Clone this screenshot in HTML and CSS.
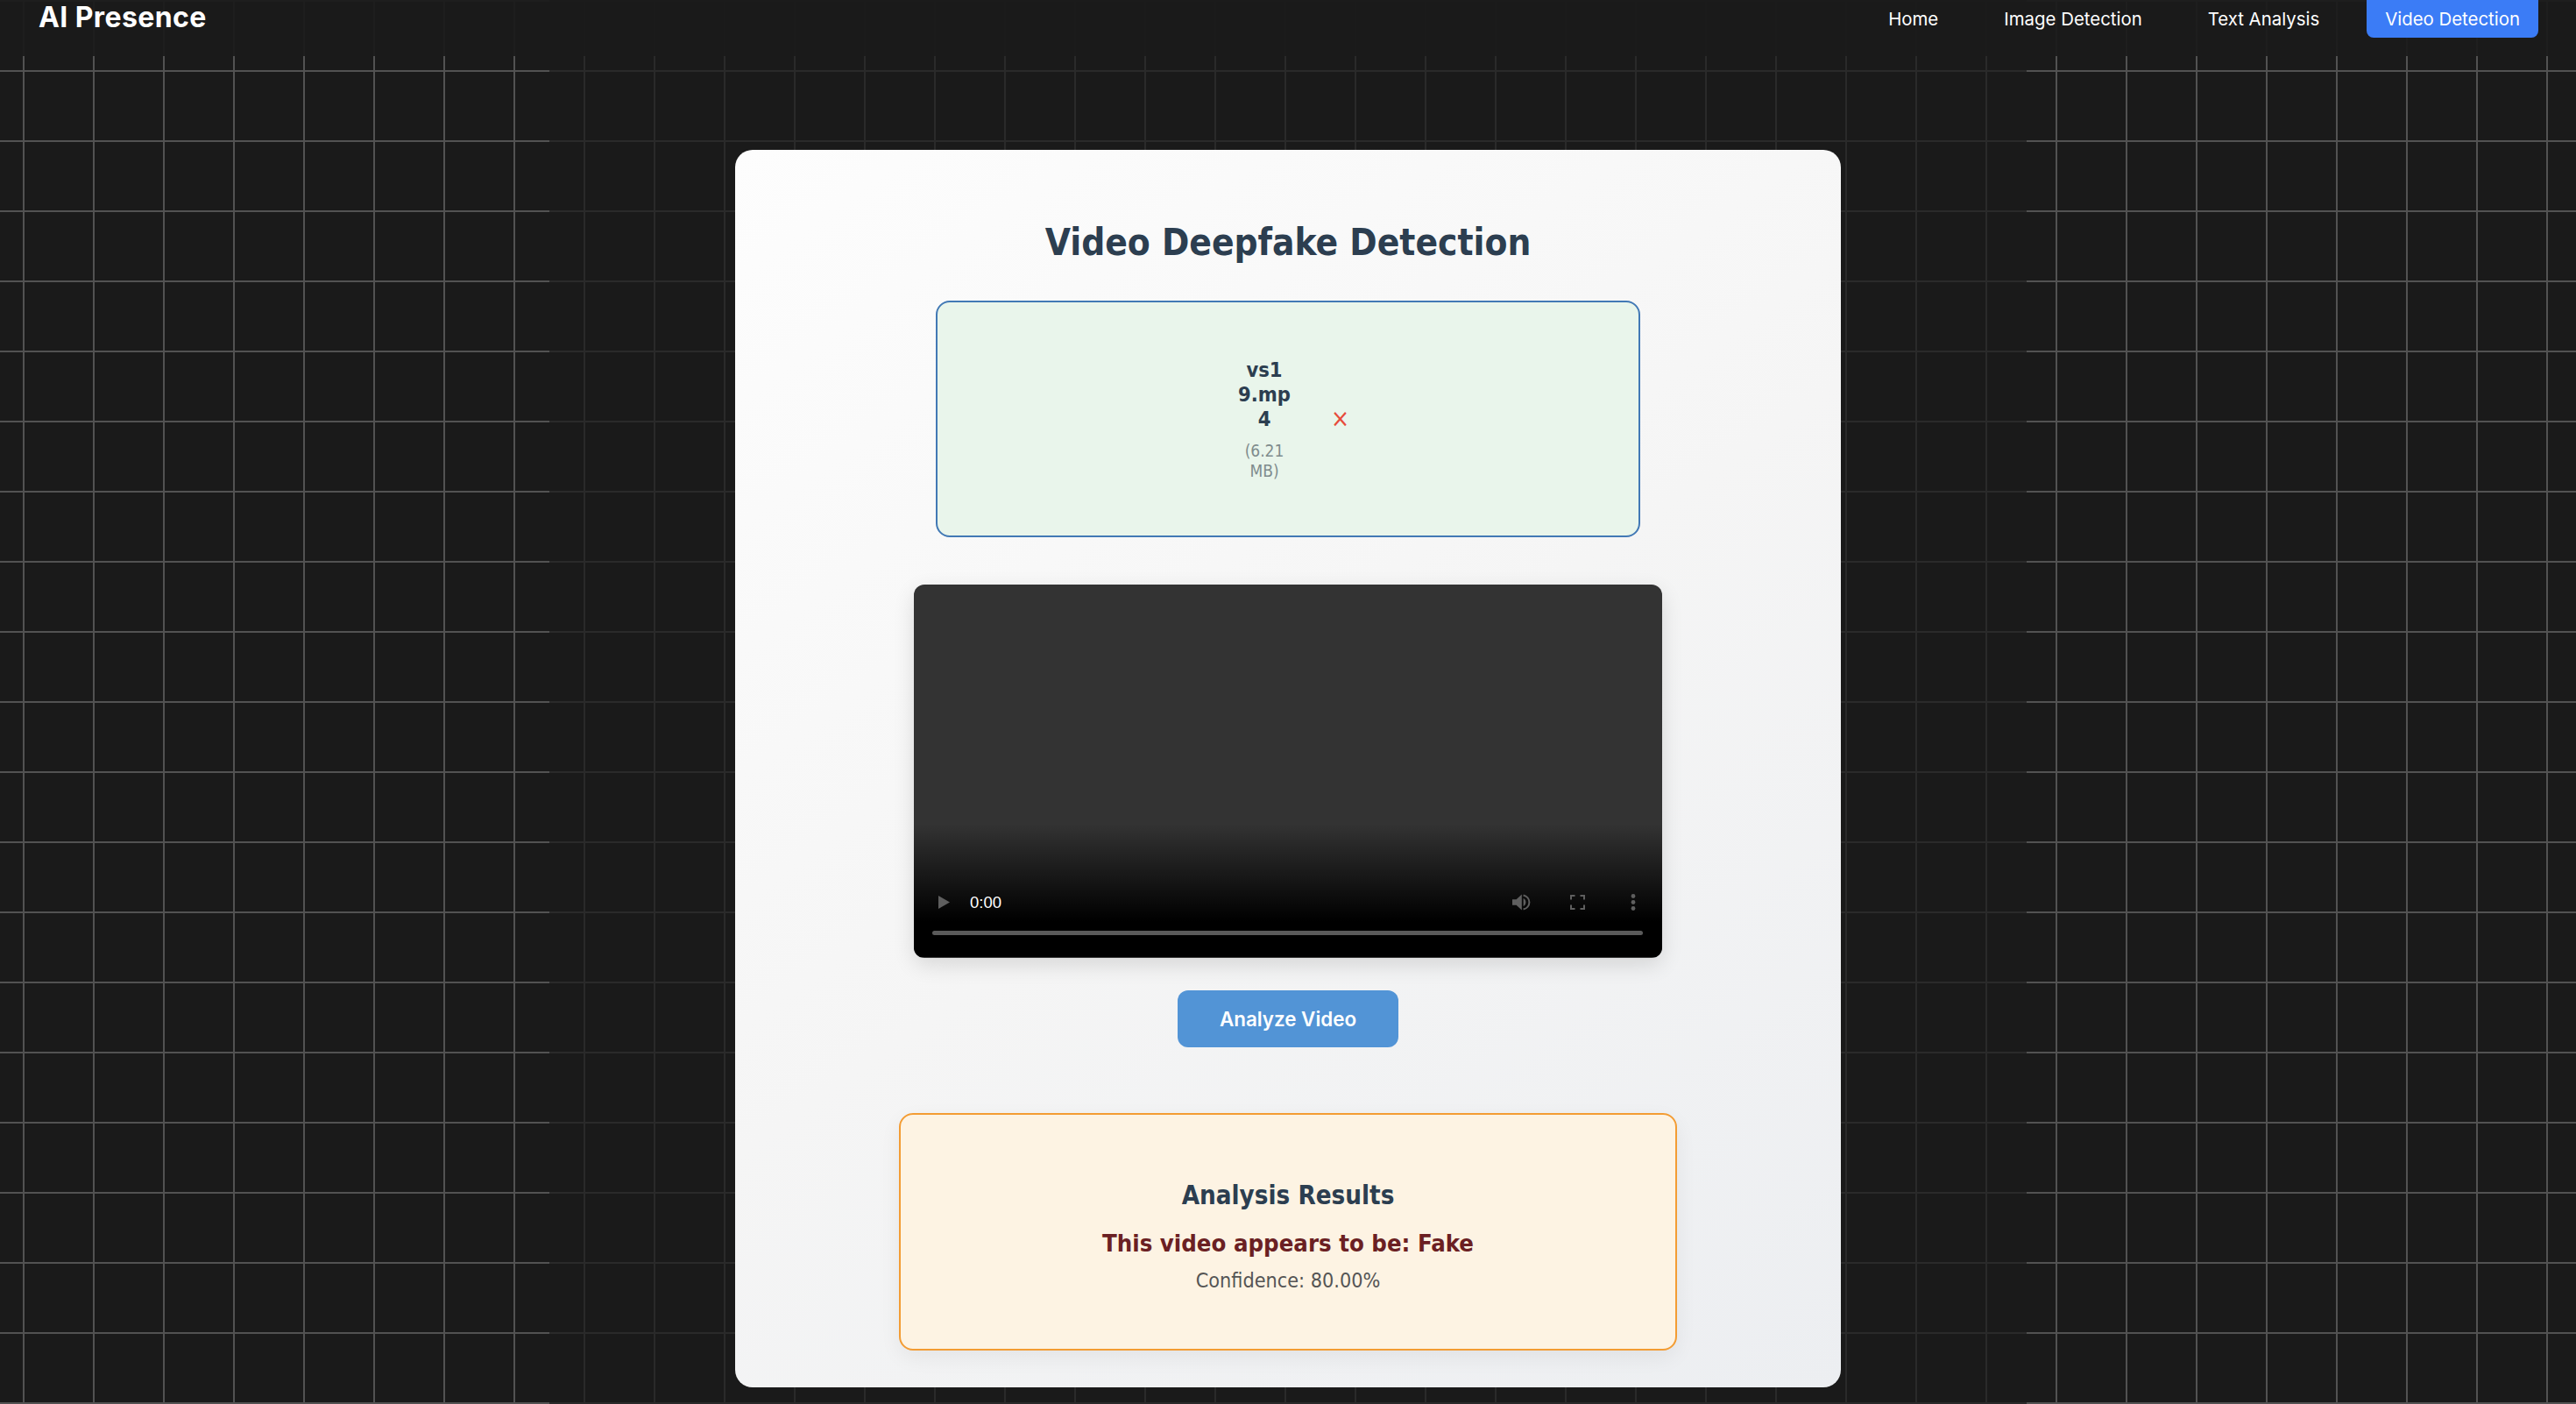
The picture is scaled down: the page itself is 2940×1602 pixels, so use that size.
FILE: index.html
```html
<!DOCTYPE html>
<html lang="en">
<head>
<meta charset="utf-8">
<title>AI Presence - Video Detection</title>
<link rel="stylesheet" href="styles.css">
</head>
<body>
<nav class="nav">
  <div class="logo">AI Presence</div>
  <div class="links">
    <a class="link">Home</a>
    <a class="link">Image Detection</a>
    <a class="link">Text Analysis</a>
    <a class="link active">Video Detection</a>
  </div>
</nav>
<main class="main">
  <section class="card">
    <h1 class="title">Video Deepfake Detection</h1>
    <div class="upload">
      <div class="file">
        <div class="file-text">
          <div class="file-name">vs1<br>9.mp<br>4</div>
          <div class="file-size">(6.21<br>MB)</div>
        </div>
        <span class="remove">×</span>
      </div>
    </div>
    <div class="video">
      <div class="controls">
        <div class="control-row">
          <svg class="icon-play" width="13" height="15" viewBox="0 0 13 15"><path d="M0 0L13 7.5L0 15Z"/></svg>
          <span class="time">0:00</span>
          <span class="spacer"></span>
          <svg class="icon-volume" width="21" height="19" viewBox="0 0 21 19"><path class="solid" d="M0 6.3H4.6L10.8 0.5V18.5L4.6 12.7H0Z"/><path class="solid" d="M12.6 5V14C14.4 13.2 15.4 11.5 15.4 9.5C15.4 7.5 14.4 5.8 12.6 5Z"/><path class="line" d="M12.6 1.4C16.6 2.3 19.4 5.6 19.4 9.5C19.4 13.4 16.6 16.7 12.6 17.6"/></svg>
          <svg class="icon-full" width="17" height="17" viewBox="0 0 17 17"><path class="line" d="M1 5.5V1H5.5M11.5 1H16V5.5M16 11.5V16H11.5M5.5 16H1V11.5"/></svg>
          <svg class="icon-more" width="6" height="19" viewBox="0 0 6 19"><circle class="solid" cx="3" cy="2.5" r="2.4"/><circle class="solid" cx="3" cy="9.5" r="2.4"/><circle class="solid" cx="3" cy="16.5" r="2.4"/></svg>
        </div>
        <div class="track"></div>
      </div>
    </div>
    <button class="analyze">Analyze Video</button>
    <div class="result">
      <h2 class="result-title">Analysis Results</h2>
      <p class="verdict">This video appears to be: Fake</p>
      <p class="confidence">Confidence: 80.00%</p>
    </div>
  </section>
</main>
</body>
</html>
```
FILE: styles.css
```css
* { box-sizing: border-box; }
html, body { height: 100%; margin: 0; overflow: hidden; }
body {
  position: relative;
  display: flow-root;
  background-color: #1a1a1a;
  background-image:
    linear-gradient(90deg, #2a2a2a 2px, transparent 2px),
    linear-gradient(#2a2a2a 2px, transparent 2px);
  background-size: 80px 100%, 100% 80px;
  background-position: 26px 0, 0 0;
  font-family: "DejaVu Sans Condensed", "DejaVu Sans", sans-serif;
}
body::before, body::after {
  content: "";
  position: absolute;
  top: 0;
  bottom: 0;
  width: 627px;
  background-image:
    linear-gradient(90deg, #525252 2px, transparent 2px),
    linear-gradient(#525252 2px, transparent 2px);
  background-size: 80px 100%, 100% 80px;
}
body::before { left: 0; background-position: 26px 0, 0 0; }
body::after { right: 0; background-position: 33px 0, 0 0; }

.nav {
  position: relative;
  z-index: 2;
  height: 72px;
  margin-top: -8px;
  padding: 0 43px 0 44px;
  display: flex;
  justify-content: space-between;
  align-items: flex-start;
  background: rgba(26, 26, 26, 0.92);
  font-family: Inter, "Liberation Sans", sans-serif;
  color: #fff;
}
.logo {
  font-size: 32px;
  font-weight: 700;
  line-height: 40px;
  margin-top: 8px;
  letter-spacing: 0.4px;
}
.links { display: flex; gap: 33px; }
.link {
  font-size: 20.4px;
  line-height: 27px;
  padding: 16px 21px 8px;
  border-radius: 8px;
}
.link.active { background: #3b7cf6; }

.main {
  position: relative;
  z-index: 1;
  display: flex;
  justify-content: center;
}
.card {
  width: 1262px;
  height: 1412px;
  margin-top: 107px;
  padding-top: 78px;
  border-radius: 20px;
  background: linear-gradient(145deg, #fdfdfd, #f5f5f5 50%, #eceef1);
  display: flex;
  flex-direction: column;
  align-items: center;
}
.title {
  margin: 0 0 38px;
  font-size: 42px;
  line-height: 56px;
  font-weight: 700;
  color: #2c3e50;
}
.upload {
  width: 804px;
  height: 270px;
  border: 2px solid #4279b5;
  border-radius: 16px;
  background: #e9f5eb;
  display: flex;
  align-items: center;
  justify-content: center;
}
.file { display: flex; align-items: center; gap: 39px; }
.file-text { width: 80px; text-align: center; }
.file-name { font-size: 23.5px; line-height: 28px; font-weight: 700; color: #2c3e50; }
.file-size { margin-top: 11px; font-size: 19px; line-height: 23px; color: #7f8c8d; }
.remove { display: flex; justify-content: center; width: 15px; font-size: 28px; line-height: 20px; color: #e74c3c; }

.video {
  position: relative;
  width: 854px;
  height: 426px;
  margin-top: 54px;
  border-radius: 12px;
  background: #333;
  box-shadow: 0 8px 24px rgba(0, 0, 0, 0.12);
  display: flex;
  flex-direction: column;
  justify-content: flex-end;
  overflow: hidden;
}
.controls {
  height: 152px;
  padding: 0 22px 25px 21px;
  margin-bottom: 1px;
  display: flex;
  flex-direction: column;
  justify-content: flex-end;
  background: linear-gradient(rgba(0, 0, 0, 0), #000 73%);
}
.control-row { display: flex; align-items: center; height: 19px; margin-bottom: 23px; padding: 0 0 0 7px; }
.time { margin-left: 23px; font-family: "Liberation Sans", sans-serif; font-size: 18.5px; line-height: 19px; color: #fff; }
.spacer { flex: 1; }
.icon-play { fill: #5f5f5f; }
.solid { fill: #5f5f5f; }
.line { fill: none; stroke: #5f5f5f; stroke-width: 2; }
.icon-full { margin-left: 45px; }
.icon-more { margin-left: 52px; margin-right: 8px; }
.track { height: 5px; border-radius: 3px; background: #5a5a5a; }

.analyze {
  width: 252px;
  height: 65px;
  margin-top: 37px;
  border: 0;
  border-radius: 12px;
  background: #5294d6;
  color: #fff;
  font-family: Inter, "Liberation Sans", sans-serif;
  font-size: 22.4px;
  font-weight: 600;
}
.result {
  width: 888px;
  height: 271px;
  margin-top: 75px;
  padding-top: 72px;
  border: 2px solid #f39c33;
  border-radius: 16px;
  background: #fdf3e3;
  box-shadow: 0 8px 24px rgba(0, 0, 0, 0.06);
  text-align: center;
}
.result-title { margin: 0; font-size: 29.3px; line-height: 40px; font-weight: 700; color: #2c3e50; }
.verdict { margin: 17px 0 0; font-size: 27.3px; line-height: 36px; font-weight: 700; color: #6b1f23; }
.confidence { margin: 9px 0 0; font-size: 23.2px; line-height: 30px; color: #555; }
```
